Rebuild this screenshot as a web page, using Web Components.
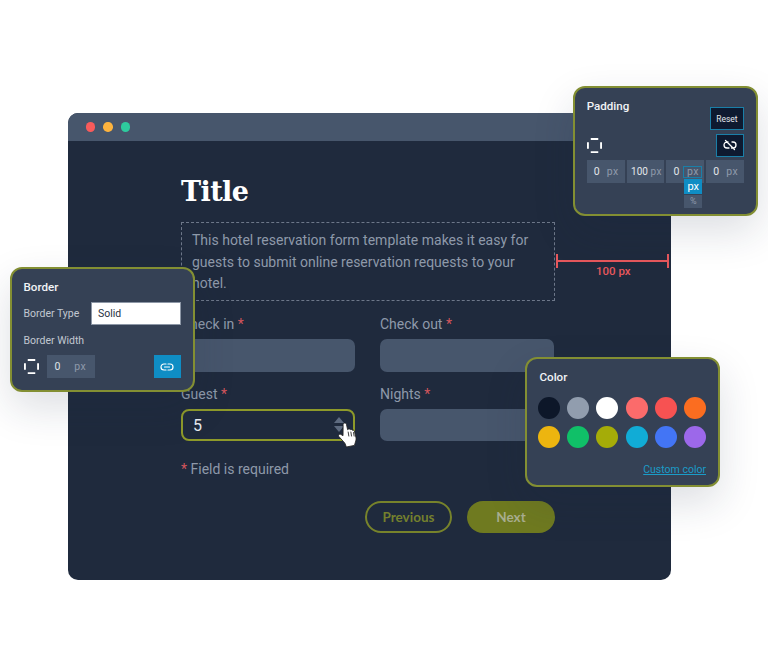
<!DOCTYPE html>
<html>
<head>
<meta charset="utf-8">
<title>Form designer</title>
<style>
  html, body { margin: 0; background: #fff; }
  body { font-family: Roboto, "Liberation Sans", sans-serif; }
</style>
</head>
<body>
<form-stage>
  <browser-window>
    <form-body></form-body>
  </browser-window>
  <padding-panel></padding-panel>
  <border-panel></border-panel>
  <color-panel></color-panel>
</form-stage>

<script>
const frameIcon = (size) => `
  <svg width="${size}" height="${size}" viewBox="0 0 16 16" fill="none" stroke="#fff" stroke-width="2" style="flex:none">
    <path d="M4 1h8M4 15h8M1 4.500v7M15 4.500v7"/>
  </svg>`;

class FormStage extends HTMLElement {
  constructor () {
    super();
    this.attachShadow({ mode: "open" });
    this.shadowRoot.innerHTML = `
      <style>
        :host { display: block; position: relative; width: 768px; height: 666px; overflow: hidden; background: #fff; }
      </style>
      <slot></slot>`;
  }
}

class BrowserWindow extends HTMLElement {
  constructor () {
    super();
    this.attachShadow({ mode: "open" });
    this.shadowRoot.innerHTML = `
      <style>
        :host { display: flex; flex-direction: column; position: absolute; left: 68px; top: 113px; width: 603px; height: 467px;
                border-radius: 10px; overflow: hidden; background: #1f2a3d; }
        .bar { height: 28px; flex: none; background: #47566c; display: flex; align-items: center; gap: 8px; padding-left: 17.5px; }
        .dot { width: 9.500px; height: 9.500px; border-radius: 50%; }
      </style>
      <div class="bar">
        <span class="dot" style="background:#f95b5b"></span>
        <span class="dot" style="background:#fdb33e"></span>
        <span class="dot" style="background:#2ecb9e"></span>
      </div>
      <slot></slot>`;
  }
}

class FormField extends HTMLElement {
  constructor () {
    super();
    this.attachShadow({ mode: "open" });
    const value = this.getAttribute("value");
    this.shadowRoot.innerHTML = `
      <style>
        :host { display: block; width: 174px; }
        label { display: block; height: 17px; line-height: 17px; font-size: 14px; color: #8e99aa; white-space: nowrap; }
        b { color: #d2555c; font-weight: 400; }
        .input { height: ${this.hasAttribute("short") ? 32 : 33}px; box-sizing: border-box; margin-top: 6px; border-radius: 7px; background: #47566c; }
        .input.active { height: 32px; background: #1f2a3d; border: 2px solid #8e9a2a; display: flex; align-items: center;
                        padding-left: 10px; color: #e8ebef; font-size: 16px; position: relative; border-radius: 8px; }
        .spin { position: absolute; right: 9px; top: 6px; width: 0; height: 0; border: 5px solid transparent; border-top: 0; border-bottom: 6px solid #5e6b80; }
        .spin.down { top: 15px; border-bottom: 0; border-top: 6px solid #5e6b80; }
        svg { position: absolute; left: 153px; top: 10px; }
      </style>
      <label>${this.getAttribute("label")} <b>*</b></label>
      ${value
        ? `<div class="input active">${value}<span class="spin"></span><span class="spin down"></span>
             <svg width="25" height="28" viewBox="0 0 26 29">
               <path d="M8 2.5c1-1 2.6-.5 2.9 1l1.2 5.5.7-.6c1-.6 2 0 2.2.6.7-.5 1.800-.2 2.100.6.8-.4 1.800 0 2 .8l1.600 6.500c.4 2 .1 3.500-.5 5l-1 3.400-8.400 1.700-1.600-4-6.300-7c-.9-1.200.4-3 2-2.200l2.400 1.400L7.400 4.400c-.2-.8 0-1.400.6-1.900z" fill="#fff" stroke="#222" stroke-width=".9" stroke-linejoin="round"/>
               <path d="M12.600 11l.8 5M15.400 11l.8 5M18.200 11.500l.7 4.500" stroke="#222" stroke-width=".9" fill="none"/>
             </svg></div>`
        : `<div class="input"></div>`}`;
  }
}

class FormBody extends HTMLElement {
  constructor () {
    super();
    this.attachShadow({ mode: "open" });
    this.shadowRoot.innerHTML = `
      <style>
        :host { display: block; position: relative; padding: 32px 116px 0 113px; color: #fff; }
        h1 { margin: 0; font: 700 27px/37px "DejaVu Serif", "Liberation Serif", serif; color: #fff; letter-spacing: -.6px; }
        .intro { margin-top: 12px; height: 79px; box-sizing: border-box; border: 1px dashed #6d7789; padding: 7px 10px 0 10px;
                 font-size: 14px; line-height: 21.500px; color: #8e99aa; }
        .grid { display: grid; grid-template-columns: 174px 174px; column-gap: 25px; row-gap: 14px; margin-top: 15px; }
        .note { margin-top: 20px; font-size: 14px; line-height: 17px; color: #8e99aa; }
        .note b { color: #d2555c; font-weight: 400; }
        .actions { display: flex; justify-content: flex-end; gap: 15px; margin-top: 23px; width: 374px; }
        button { height: 32px; width: 88px; box-sizing: border-box; border-radius: 16px; font: 700 13.500px Lato, "Liberation Sans", sans-serif; padding: 0; }
        .prev { width: 87px; background: transparent; border: 2px solid #77832b; color: #74802d; }
        .next { background: #6f7a20; border: 0; color: #a9ae90; }
        .measure { position: absolute; left: 488px; top: 113px; width: 113px; height: 14px; box-sizing: border-box; }
        .line { position: absolute; left: 0; right: 0; top: 6px; height: 2px; background: #e5575c; }
        .measure::before, .measure::after { content: ""; position: absolute; top: 0; width: 2px; height: 14px; background: #e5575c; }
        .measure::before { left: 0; }
        .measure::after { right: 0; }
        .size { position: absolute; left: 528px; top: 123px; font-size: 11.500px; font-weight: 500; line-height: 14px; color: #e5575c; }
      </style>
      <h1>Title</h1>
      <div class="intro">This hotel reservation form template makes it easy for guests to submit online reservation requests to your hotel.</div>
      <div class="grid">
        <form-field label="Check in"></form-field>
        <form-field label="Check out"></form-field>
        <form-field label="Guest" value="5"></form-field>
        <form-field label="Nights" short></form-field>
      </div>
      <div class="note"><b>*</b> Field is required</div>
      <div class="actions">
        <button class="prev">Previous</button>
        <button class="next">Next</button>
      </div>
      <div class="measure"><span class="line"></span></div>
      <span class="size">100 px</span>`;
  }
}

// shared look of the floating panels
const panelCss = `
  :host { display: block; position: absolute; box-sizing: border-box; background: #354155; border: 2px solid #838f33; border-radius: 12px;
          box-shadow: 0 16px 40px rgba(30, 42, 70, .15); color: #fff; font-family: Roboto, "Liberation Sans", sans-serif; }
  h2 { margin: 0 0 -1.500px; padding-top: 1.500px; font-size: 11.600px; line-height: 15px; font-weight: 500; color: #f1f3f5; }
`;

class PaddingPanel extends HTMLElement {
  constructor () {
    super();
    this.attachShadow({ mode: "open" });
    const cell = (v, extra = "") => `<div class="cell"><span class="v">${v}</span><span class="u ${extra}">px</span></div>`;
    this.shadowRoot.innerHTML = `
      <style>
        ${panelCss}
        :host { left: 572.700px; top: 86.300px; width: 185.500px; height: 130px; padding: 9.500px 12px 0 12px; }
        .top { display: flex; justify-content: space-between; height: 21px; }
        .reset { width: 34.500px; height: 22.500px; margin-top: 9.500px; box-sizing: border-box; background: #0e1a30; border: 1.500px solid #1a7fa8; font-size: 8.500px;
                 display: flex; align-items: center; justify-content: center; color: #e6e9ee; }
        .row { display: flex; justify-content: space-between; align-items: center; margin-top: 15px; height: 23px; }
        .link { width: 28px; height: 23px; box-sizing: border-box; background: #0e1a30; border: 1.500px solid #1a7fa8; display: flex; align-items: center; justify-content: center; }
        .cells { display: flex; gap: 2px; margin-top: 3px; }
        .cell { width: 38px; height: 23px; background: #47566c; display: flex; align-items: center; justify-content: space-between; box-sizing: border-box; padding: 0 6px 0 7px; font-size: 10.500px; position: relative; }
        .cell:nth-child(2) { padding: 0 2.500px 0 4.500px; font-size: 10px; }
        .v { color: #e3e6ea; }
        .u { color: #8f9aab; letter-spacing: .4px; }
        .u.open { position: absolute; left: 17px; top: 6px; width: 19px; height: 12px; text-align: center; line-height: 10px; box-sizing: border-box; border: 1px solid #1a7fa8; }
        .menu { position: absolute; left: 109.500px; top: 90.500px; width: 18px; font-size: 11px; text-align: center; }
        .menu div { height: 15px; line-height: 15px; }
        .on { background: #0f8dc4; color: #fff; }
        .off { background: #47566c; color: #8f9aab; font-size: 9px; margin-top: 1px; height: 13px !important; line-height: 13px !important; }
      </style>
      <div class="top"><h2>Padding</h2><div class="reset">Reset</div></div>
      <div class="row">
        ${frameIcon(15)}
        <div class="link">
          <svg width="14" height="14" viewBox="0 0 14 14" fill="none" stroke="#fff" stroke-width="1.300" stroke-linecap="round">
            <path d="M5 4H4a3 3 0 0 0 0 6h2M9 4h1a3 3 0 0 1 0 6H8.500M2.500 2.500l9 9"/>
          </svg>
        </div>
      </div>
      <div class="cells">
        ${cell(0)}${cell(100)}${cell(0, "open")}${cell(0)}
      </div>
      <div class="menu"><div class="on">px</div><div class="off">%</div></div>`;
  }
}

class BorderPanel extends HTMLElement {
  constructor () {
    super();
    this.attachShadow({ mode: "open" });
    this.shadowRoot.innerHTML = `
      <style>
        ${panelCss}
        :host { left: 9.500px; top: 266.700px; width: 185.500px; height: 125px; padding: 10px 12px 0 12px; }
        .line { display: flex; align-items: center; justify-content: space-between; margin-top: 8.500px; font-size: 10.500px; color: #c2c8d1; height: 23px; }
        .select { width: 90.500px; height: 23px; box-sizing: border-box; background: #fff; border: 1px solid #8d97a6; color: #27303f; font-size: 10.500px; line-height: 21px; padding-left: 6.500px; }
        .cap { margin-top: 9px; font-size: 10.500px; line-height: 14px; color: #c2c8d1; }
        .row { display: flex; align-items: center; margin-top: 7px; height: 23px; }
        .num { width: 48.500px; height: 23px; margin-left: 8px; background: #47566c; display: flex; align-items: center; justify-content: space-between; padding: 0 9px 0 8px; box-sizing: border-box; font-size: 10.500px; }
        .num span:first-child { color: #dfe3e8; }
        .num span:last-child { color: #8f9aab; letter-spacing: .4px; }
        .link { margin-left: auto; width: 27.500px; height: 23px; background: #0f8dc4; display: flex; align-items: center; justify-content: center; }
      </style>
      <h2>Border</h2>
      <div class="line"><span>Border Type</span><span class="select">Solid</span></div>
      <div class="cap">Border Width</div>
      <div class="row">
        ${frameIcon(15)}
        <div class="num"><span>0</span><span>px</span></div>
        <div class="link">
          <svg width="14" height="14" viewBox="0 0 14 14" fill="none" stroke="#fff" stroke-width="1.200" stroke-linecap="round">
            <path d="M6 4H4a3 3 0 0 0 0 6h2M8 4h2a3 3 0 0 1 0 6H8M4.500 7h5"/>
          </svg>
        </div>
      </div>`;
  }
}

class ColorPanel extends HTMLElement {
  constructor () {
    super();
    this.attachShadow({ mode: "open" });
    const colors = ["#0d1729", "#919dae", "#ffffff", "#fb6b6b", "#f75252", "#fb6d20",
                    "#edb50f", "#10c068", "#a5ac08", "#11acd6", "#4375f5", "#9c68ea"];
    this.shadowRoot.innerHTML = `
      <style>
        ${panelCss}
        :host { left: 524.500px; top: 357.300px; width: 195.500px; height: 130px; padding: 9.500px 12px 0 11.500px; }
        h2 { padding-left: 1.500px; }
        .swatches { display: grid; grid-template-columns: repeat(6, 22px); justify-content: space-between; row-gap: 7.300px; margin-top: 13px; }
        .swatches span { width: 22px; height: 22px; border-radius: 50%; }
        .custom { display: block; text-align: right; margin-top: 15px; font-size: 10.500px; line-height: 14px; color: #1a9cc8; text-decoration: underline; }
      </style>
      <h2>Color</h2>
      <div class="swatches">${colors.map((c) => `<span style="background:${c}"></span>`).join("")}</div>
      <span class="custom">Custom color</span>`;
  }
}

customElements.define("form-stage", FormStage);
customElements.define("browser-window", BrowserWindow);
customElements.define("form-field", FormField);
customElements.define("form-body", FormBody);
customElements.define("padding-panel", PaddingPanel);
customElements.define("border-panel", BorderPanel);
customElements.define("color-panel", ColorPanel);
</script>
</body>
</html>
